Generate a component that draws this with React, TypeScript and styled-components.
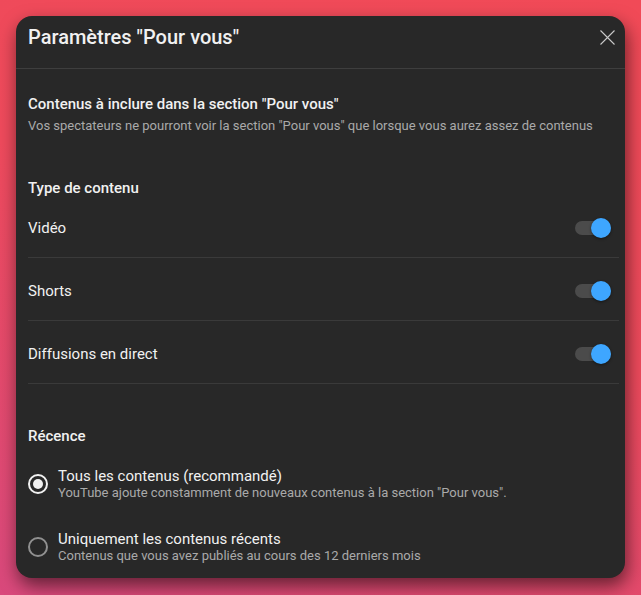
import { FC, useState } from 'react'
import styled, { createGlobalStyle } from 'styled-components'

const GlobalStyle = createGlobalStyle`
  html, body {
    margin: 0;
    padding: 0;
  }
  body {
    width: 641px;
    height: 595px;
    overflow: hidden;
    background: linear-gradient(200deg, #f14a57 0%, #ee4a5c 45%, #d9497c 100%);
    font-family: Roboto, 'Noto Sans', Arial, sans-serif;
  }
`

const Page = styled.div`
  padding: 16px;
`

const Dialog = styled.div`
  width: 609px;
  background: #282828;
  border-radius: 16px;
  box-shadow: 2px 8px 18px rgba(0, 0, 0, 0.55);
  color: #f1f1f1;
  overflow: hidden;
`

const Header = styled.div`
  display: flex;
  justify-content: space-between;
  align-items: flex-start;
  height: 53px;
  padding: 7px 9px 0 12px;
  box-sizing: border-box;
  border-bottom: 1px solid #3e3e3e;
`

const Title = styled.h1`
  margin: 0;
  font-size: 20px;
  line-height: 28px;
  font-weight: 500;
`

const CloseButton = styled.button`
  display: flex;
  align-items: center;
  justify-content: center;
  width: 18px;
  height: 18px;
  margin-top: 5px;
  padding: 0;
  border: none;
  background: transparent;
  cursor: pointer;
`

const Body = styled.div`
  padding: 25px 6px 14px 12px;
`

const SectionTitle = styled.div<{ $gap?: number }>`
  margin-top: ${({ $gap }) => $gap ?? 0}px;
  font-size: 15px;
  line-height: 20px;
  font-weight: 500;
`

const SectionHint = styled.div`
  margin-top: 3px;
  font-size: 13px;
  line-height: 18px;
  color: #aaaaaa;
`

const ToggleRow = styled.div<{ $first?: boolean }>`
  display: flex;
  justify-content: space-between;
  align-items: center;
  padding: ${({ $first }) => ($first ? '20px' : '23px')} 8px 19px 0;
  border-bottom: 1px solid #3a3a3a;
  font-size: 15px;
  line-height: 20px;
`

const Track = styled.div<{ $on: boolean }>`
  position: relative;
  width: 36px;
  height: 14px;
  border-radius: 7px;
  background: #4b4b4b;
  cursor: pointer;
`

const Knob = styled.div<{ $on: boolean }>`
  position: absolute;
  top: -3px;
  left: ${({ $on }) => ($on ? '16px' : '0')};
  width: 20px;
  height: 20px;
  border-radius: 50%;
  background: ${({ $on }) => ($on ? '#3ea6ff' : '#bdbdbd')};
  box-shadow: 0 1px 3px rgba(0, 0, 0, 0.45);
`

const RadioList = styled.div`
  display: flex;
  flex-direction: column;
  gap: 29px;
  margin-top: 21px;
`

const RadioItem = styled.label`
  display: flex;
  align-items: center;
  gap: 10px;
  cursor: pointer;
`

const RadioCircle = styled.span<{ $checked: boolean }>`
  display: flex;
  align-items: center;
  justify-content: center;
  flex: none;
  width: 20px;
  height: 20px;
  box-sizing: border-box;
  border-radius: 50%;
  border: 2px solid ${({ $checked }) => ($checked ? '#f1f1f1' : '#909090')};

  &::after {
    content: '';
    display: ${({ $checked }) => ($checked ? 'block' : 'none')};
    width: 10px;
    height: 10px;
    border-radius: 50%;
    background: #f1f1f1;
  }
`

const RadioText = styled.div`
  display: flex;
  flex-direction: column;
`

const RadioLabel = styled.div`
  font-size: 15px;
  line-height: 18px;
`

const RadioHint = styled.div`
  font-size: 13px;
  line-height: 16px;
  color: #aaaaaa;
`

const CloseIcon = () => (
  <svg width="15" height="15" viewBox="0 0 15 15">
    <path d="M0.5 0.5 L14.5 14.5 M14.5 0.5 L0.5 14.5" stroke="#c8c8c8" strokeWidth="1.1" fill="none" />
  </svg>
)

const Toggle: FC<{ on: boolean; onClick(): void }> = ({ on, onClick }) => (
  <Track $on={on} onClick={onClick}>
    <Knob $on={on} />
  </Track>
)

const contentTypes = ['Vidéo', 'Shorts', 'Diffusions en direct']

const recencyOptions = [
  {
    label: 'Tous les contenus (recommandé)',
    hint: 'YouTube ajoute constamment de nouveaux contenus à la section "Pour vous".',
  },
  {
    label: 'Uniquement les contenus récents',
    hint: 'Contenus que vous avez publiés au cours des 12 derniers mois',
  },
]

export default function App() {
  const [enabled, setEnabled] = useState<Record<string, boolean>>({
    Vidéo: true,
    Shorts: true,
    'Diffusions en direct': true,
  })
  const [recency, setRecency] = useState(0)

  return (
    <Page>
      <GlobalStyle />
      <Dialog>
        <Header>
          <Title>Paramètres "Pour vous"</Title>
          <CloseButton aria-label="Fermer">
            <CloseIcon />
          </CloseButton>
        </Header>
        <Body>
          <SectionTitle>Contenus à inclure dans la section "Pour vous"</SectionTitle>
          <SectionHint>
            Vos spectateurs ne pourront voir la section "Pour vous" que lorsque vous aurez assez de contenus
          </SectionHint>

          <SectionTitle $gap={43}>Type de contenu</SectionTitle>
          {contentTypes.map((name, i) => (
            <ToggleRow key={name} $first={i === 0}>
              <span>{name}</span>
              <Toggle
                on={enabled[name]}
                onClick={() => setEnabled({ ...enabled, [name]: !enabled[name] })}
              />
            </ToggleRow>
          ))}

          <SectionTitle $gap={42}>Récence</SectionTitle>
          <RadioList>
            {recencyOptions.map((opt, i) => (
              <RadioItem key={opt.label} onClick={() => setRecency(i)}>
                <RadioCircle $checked={recency === i} />
                <RadioText>
                  <RadioLabel>{opt.label}</RadioLabel>
                  <RadioHint>{opt.hint}</RadioHint>
                </RadioText>
              </RadioItem>
            ))}
          </RadioList>
        </Body>
      </Dialog>
    </Page>
  )
}
